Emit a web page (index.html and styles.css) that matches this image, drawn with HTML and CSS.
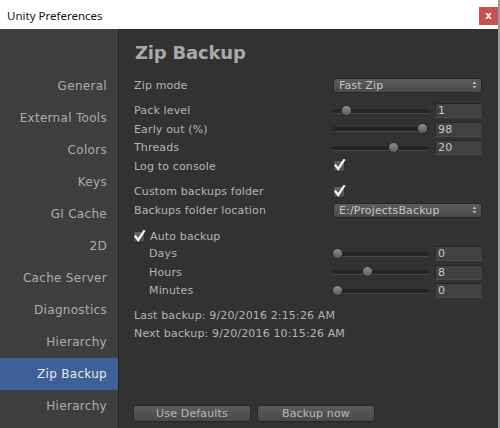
FILE: index.html
```html
<!DOCTYPE html>
<html>
<head>
<meta charset="utf-8">
<link rel="stylesheet" href="styles.css">
</head>
<body>
<div class="frame">
  <div class="window">
    <div class="titlebar">
      <span class="title">Unity Preferences</span>
      <span class="close">x</span>
    </div>
    <div class="content">
      <nav class="sidebar">
        <div class="item">General</div>
        <div class="item">External Tools</div>
        <div class="item">Colors</div>
        <div class="item">Keys</div>
        <div class="item">GI Cache</div>
        <div class="item">2D</div>
        <div class="item">Cache Server</div>
        <div class="item">Diagnostics</div>
        <div class="item">Hierarchy</div>
        <div class="item selected">Zip Backup</div>
        <div class="item">Hierarchy</div>
      </nav>
      <main class="main">
        <h1 class="heading">Zip Backup</h1>
        <div class="row">
          <span class="label">Zip mode</span>
          <div class="popup"><span>Fast Zip</span><svg class="arrows" width="5" height="8" viewBox="0 0 5 8"><path d="M0.5 3 L2.5 0.5 L4.5 3 Z M0.5 5 L2.5 7.5 L4.5 5 Z" fill="#bdbdbd"/></svg></div>
        </div>
        <div class="group">
          <div class="row">
            <span class="label">Pack level</span>
            <div class="slider"><div class="track"><span class="thumb" style="--v:0.11"></span></div></div>
            <div class="num">1</div>
          </div>
          <div class="row">
            <span class="label">Early out (%)</span>
            <div class="slider"><div class="track"><span class="thumb" style="--v:0.985"></span></div></div>
            <div class="num">98</div>
          </div>
          <div class="row">
            <span class="label">Threads</span>
            <div class="slider"><div class="track"><span class="thumb" style="--v:0.655"></span></div></div>
            <div class="num">20</div>
          </div>
          <div class="row">
            <span class="label">Log to console</span>
            <span class="check"><svg width="13" height="13" viewBox="0 0 13 13"><path d="M2.5 6.5 L5.2 10 L11 1.2" fill="none" stroke="#f2f2f2" stroke-width="2.3" stroke-linecap="square"/></svg></span>
          </div>
        </div>
        <div class="group">
          <div class="row">
            <span class="label">Custom backups folder</span>
            <span class="check"><svg width="13" height="13" viewBox="0 0 13 13"><path d="M2.5 6.5 L5.2 10 L11 1.2" fill="none" stroke="#f2f2f2" stroke-width="2.3" stroke-linecap="square"/></svg></span>
          </div>
          <div class="row">
            <span class="label">Backups folder location</span>
            <div class="popup"><span>E:/ProjectsBackup</span><svg class="arrows" width="5" height="8" viewBox="0 0 5 8"><path d="M0.5 3 L2.5 0.5 L4.5 3 Z M0.5 5 L2.5 7.5 L4.5 5 Z" fill="#bdbdbd"/></svg></div>
          </div>
        </div>
        <div class="group">
          <div class="toggle">
            <span class="check"><svg width="13" height="13" viewBox="0 0 13 13"><path d="M2.5 6.5 L5.2 10 L11 1.2" fill="none" stroke="#f2f2f2" stroke-width="2.3" stroke-linecap="square"/></svg></span>
            <span class="toggle-label">Auto backup</span>
          </div>
          <div class="row">
            <span class="label indent">Days</span>
            <div class="slider"><div class="track"><span class="thumb" style="--v:0"></span></div></div>
            <div class="num">0</div>
          </div>
          <div class="row">
            <span class="label indent">Hours</span>
            <div class="slider"><div class="track"><span class="thumb" style="--v:0.35"></span></div></div>
            <div class="num">8</div>
          </div>
          <div class="row">
            <span class="label indent">Minutes</span>
            <div class="slider"><div class="track"><span class="thumb" style="--v:0"></span></div></div>
            <div class="num">0</div>
          </div>
        </div>
        <div class="info">
          <div class="info-line">Last backup: 9/20/2016 2:15:26 AM</div>
          <div class="info-line">Next backup: 9/20/2016 10:15:26 AM</div>
        </div>
        <div class="buttons">
          <button class="btn">Use Defaults</button>
          <button class="btn">Backup now</button>
        </div>
      </main>
    </div>
  </div>
  <div class="edge"></div>
</div>
</body>
</html>
```

FILE: styles.css
```css
* { box-sizing: border-box; }
html, body { margin: 0; padding: 0; }
body {
  width: 500px;
  height: 428px;
  overflow: hidden;
  background: #323232;
  font-family: "DejaVu Sans", sans-serif;
}
.frame {
  display: flex;
  width: 500px;
  height: 428px;
}
.window {
  flex: 1;
  display: flex;
  flex-direction: column;
  min-width: 0;
}
.edge {
  width: 2px;
  background: #9b9b9b;
}
.titlebar {
  height: 29px;
  background: #ffffff;
  display: flex;
  align-items: center;
  justify-content: space-between;
  padding: 0 0 0 7px;
  flex-shrink: 0;
}
.title {
  font-family: "Noto Sans", Roboto, sans-serif;
  font-size: 11.5px;
  color: #111111;
  margin-top: 1px;
}
.close {
  width: 19px;
  height: 18px;
  background: #c75050;
  color: #ffffff;
  font-family: "DejaVu Sans", sans-serif;
  font-weight: bold;
  font-size: 10px;
  line-height: 17px;
  text-align: center;
  margin-top: 3px;
}
.content {
  flex: 1;
  display: flex;
  min-height: 0;
}
.sidebar {
  width: 119px;
  background: #3e3e3e;
  border-right: 1px solid #232323;
  padding-top: 41px;
  display: flex;
  flex-direction: column;
}
.item {
  height: 32px;
  line-height: 33px;
  text-align: right;
  padding-right: 11px;
  font-size: 12px;
  letter-spacing: 0.3px;
  color: #adadad;
}
.item.selected {
  background: #3d6096;
  color: #ebebeb;
}
.main {
  flex: 1;
  display: flex;
  flex-direction: column;
  padding: 12px 15px 6px 15px;
  font-size: 11px;
  letter-spacing: 0.15px;
  color: #b4b4b4;
}
.heading {
  margin: 0 0 11px 0;
  height: 24px;
  line-height: 24px;
  font-size: 18px;
  letter-spacing: -0.2px;
  font-weight: bold;
  color: #a9a9a9;
  padding-left: 1px;
}
.group { margin-top: 7px; display: flex; flex-direction: column; }
.row {
  height: 18.5px;
  display: flex;
  align-items: center;
}
.label {
  width: 198px;
  flex-shrink: 0;
  white-space: nowrap;
}
.label.indent { padding-left: 15px; }
.popup {
  width: 149px;
  height: 15px;
  margin-left: 1px;
  border: 1px solid #262626;
  border-radius: 3px;
  background: linear-gradient(#5b5b5b, #4a4a4a);
  display: flex;
  align-items: center;
  justify-content: space-between;
  padding: 0 4px 0 5px;
  color: #c6c6c6;
  font-size: 11px;
}
.arrows { display: block; }
.slider {
  width: 97px;
  height: 12px;
  display: flex;
  align-items: center;
  flex-shrink: 0;
}
.track {
  position: relative;
  width: 100%;
  height: 4px;
  border-radius: 2px;
  background: #242424;
  box-shadow: 0 1px 0 #474747;
}
.thumb {
  position: absolute;
  top: -4px;
  left: calc(var(--v) * (100% - 11px));
  width: 11px;
  height: 11px;
  border-radius: 50%;
  border: 1px solid #2a2a2a;
  background: linear-gradient(#8d8d8d, #5c5c5c);
}
.num {
  width: 48px;
  height: 15px;
  margin-left: 6px;
  background: #414141;
  border-top: 1px solid #262626;
  border-left: 1px solid #2c2c2c;
  border-right: 1px solid #2c2c2c;
  border-bottom: 1px solid #4a4a4a;
  padding-left: 2px;
  line-height: 13px;
  color: #c8c8c8;
  font-size: 11px;
}
.check {
  width: 12px;
  height: 12px;
  margin-left: 1px;
  position: relative;
  border: 1px solid #2b2b2b;
  border-radius: 2px;
  background: linear-gradient(#646464, #4b4b4b);
  flex-shrink: 0;
}
.check svg {
  position: absolute;
  left: -1px;
  top: -2px;
}
.toggle {
  height: 16px;
  margin-top: 2px;
  display: flex;
  align-items: center;
}
.toggle .check { margin-left: -1px; }
.toggle-label { margin-left: 5px; }
.info { margin-top: 7px; display: flex; flex-direction: column; }
.info-line { height: 18px; line-height: 18px; }
.buttons {
  margin-top: auto;
  display: flex;
  gap: 6px;
}
.btn {
  width: 118px;
  height: 17px;
  margin-left: -1px;
  margin-right: 1px;
  border: 1px solid #262626;
  border-radius: 3px;
  background: linear-gradient(#5c5c5c, #484848);
  color: #b8b8b8;
  font-family: "DejaVu Sans", sans-serif;
  font-size: 11px;
  letter-spacing: 0.15px;
  padding: 0;
  line-height: 15px;
}
```
